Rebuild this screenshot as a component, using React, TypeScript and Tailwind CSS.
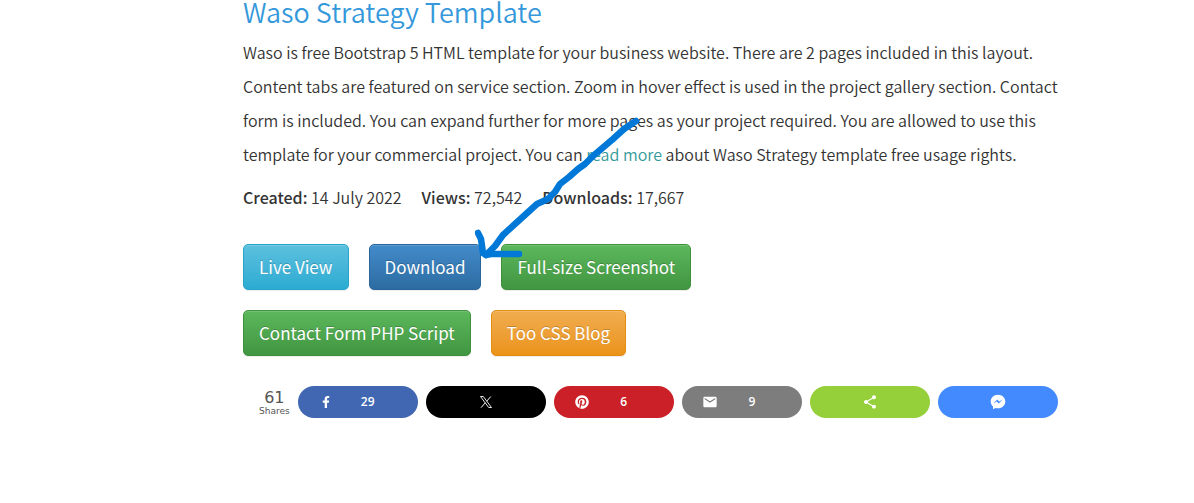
import type { ReactNode } from "react";
import { FaFacebookF, FaPinterest } from "react-icons/fa";
import { MdEmail, MdShare } from "react-icons/md";

const bodyFont = "font-['Noto_Sans_CJK_SC',sans-serif]";

const buttonBase =
  "flex h-[46px] items-center rounded-[5px] border px-[15px] text-[17px] font-normal text-white shadow-[inset_0_1px_0_rgba(255,255,255,0.15),0_1px_1px_rgba(0,0,0,0.075)] [text-shadow:0_-1px_0_rgba(0,0,0,0.2)]";

const actions = [
  [
    { label: "Live View", tone: "border-[#28a4c9] from-[#5bc0de] to-[#2aabd2]" },
    { label: "Download", tone: "border-[#2b669a] from-[#428bca] to-[#2d6ca2]" },
    { label: "Full-size Screenshot", tone: "border-[#3e8f3e] from-[#5cb85c] to-[#419641]" },
  ],
  [
    { label: "Contact Form PHP Script", tone: "border-[#3e8f3e] from-[#5cb85c] to-[#419641]" },
    { label: "Too CSS Blog", tone: "border-[#e38d13] from-[#f0ad4e] to-[#eb9316]" },
  ],
];

function XIcon() {
  return (
    <svg viewBox="0 0 16 16" className="size-4" fill="none" stroke="white" aria-hidden="true">
      <path d="M2.500 2.500h2.800L13.500 13.500h-2.800z" strokeWidth="0.900" />
      <path d="M12.800 2.500L8.700 7.200M7.200 8.900L3 13.700" strokeWidth="1" />
    </svg>
  );
}

function MessengerIcon() {
  return (
    <svg viewBox="0 0 16 16" className="size-4" aria-hidden="true">
      <path
        fill="white"
        d="M8 .8C3.900.8.700 3.700.700 7.500c0 2 .900 3.800 2.300 5v2.700l2.500-1.200c.800.200 1.600.300 2.500.300 4.100 0 7.300-3 7.300-6.800S12.100.8 8 .8z"
      />
      <path fill="#448aff" d="M3.400 9.500L7.200 5.500l2 1.900 3.400-1.900-3.800 4-2-1.900z" />
    </svg>
  );
}

type Share = { name: string; color: string; icon: ReactNode; count?: string };

const shares: Share[] = [
  { name: "Facebook", color: "bg-[#4267b2]", icon: <FaFacebookF className="size-3" />, count: "29" },
  { name: "X", color: "bg-black", icon: <XIcon /> },
  { name: "Pinterest", color: "bg-[#cb2027]", icon: <FaPinterest className="size-3.5" />, count: "6" },
  { name: "Email", color: "bg-[#7d7d7d]", icon: <MdEmail className="size-4" />, count: "9" },
  { name: "ShareThis", color: "bg-[#95d03a]", icon: <MdShare className="size-4" /> },
  { name: "Messenger", color: "bg-[#448aff]", icon: <MessengerIcon /> },
];

function ShareButton({ name, color, icon, count }: Share) {
  return (
    <button
      type="button"
      aria-label={count ? `${name} ${count}` : name}
      className={`flex h-8 flex-1 items-center rounded-full text-white ${color} ${count ? "" : "justify-center"}`}
    >
      <span className={count ? "flex w-14 justify-center" : "flex"}>{icon}</span>
      {count && (
        <span className="w-7 text-center font-['Open_Sans',sans-serif] text-xs font-semibold">{count}</span>
      )}
    </button>
  );
}

function Arrow() {
  return (
    <svg
      viewBox="0 0 170 145"
      className="pointer-events-none absolute top-[117px] left-[232px] h-[145px] w-[170px]"
      fill="none"
      stroke="#0078d7"
      strokeWidth="6.500"
      strokeLinecap="round"
      strokeLinejoin="round"
      aria-hidden="true"
    >
      <path d="M161 4L149 12L138 22L118 39L110 47L103 52L94 60L85 67L80 75L73 82L62 87L51 97L40 107L28 118L20 129L11 138" />
      <path d="M3 116L6 122L8 136L11 138L16 137H44" />
    </svg>
  );
}

export default function App() {
  return (
    <main className={`bg-white pr-[136px] pl-[243px] text-[#333] ${bodyFont}`}>
      <div className="relative">
        <h1 className="text-[27px] leading-6 font-[350] text-[#3498db]">Waso Strategy Template</h1>
        <p className="mt-[11px] text-base leading-[34px] font-[350]">
          Waso is free Bootstrap 5 HTML template for your business website. There are 2 pages included in
          this layout. Content tabs are featured on service section. Zoom in hover effect is used in the
          project gallery section. Contact form is included. You can expand further for more pages as your
          project required. You are allowed to use this template for your commercial project. You can{" "}
          <a href="#license" className="text-[#399]">
            read more
          </a>{" "}
          about Waso Strategy template free usage rights.
        </p>
        <p className="mt-[9px] flex flex-wrap gap-x-5 text-base leading-[34px] font-[350]">
          <span><strong className="font-medium">Created:</strong> 14 July 2022</span>
          <span><strong className="font-medium">Views:</strong> 72,542</span>
          <span><strong className="font-medium">Downloads:</strong> 17,667</span>
        </p>
        <div className="mt-[30px] flex flex-col gap-5">
          {actions.map((row, i) => (
            <div key={i} className="flex flex-wrap gap-5">
              {row.map(({ label, tone }) => (
                <a key={label} href="#action" className={`${buttonBase} bg-linear-to-b ${tone}`}>
                  {label}
                </a>
              ))}
            </div>
          ))}
        </div>
        <div className="mt-[30px] flex items-center gap-2 pl-4">
          <div className="pt-1 text-center font-['DejaVu_Sans',sans-serif] text-[#555]">
            <div className="text-base leading-[14px]">61</div>
            <div className="text-[9px] leading-3">Shares</div>
          </div>
          {shares.map((share) => (
            <ShareButton key={share.name} {...share} />
          ))}
        </div>
        <Arrow />
      </div>
    </main>
  );
}
